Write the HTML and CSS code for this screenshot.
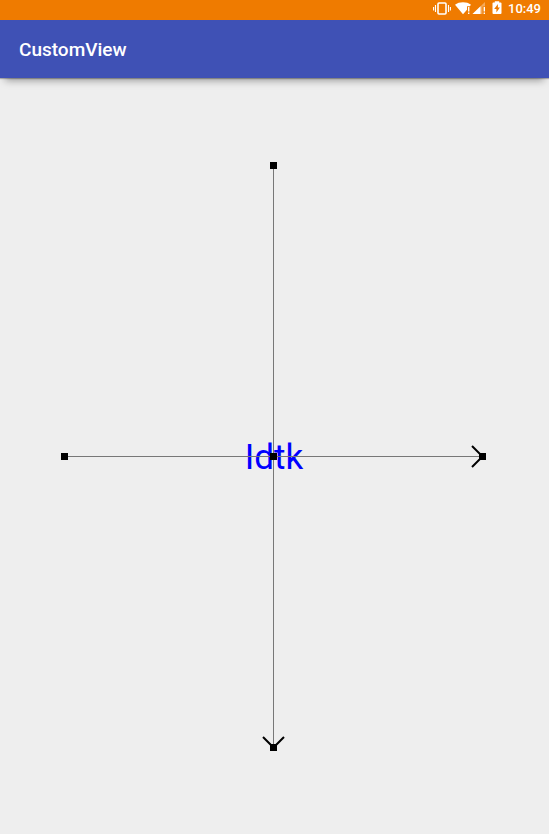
FILE: index.html
```html
<!DOCTYPE html>
<html lang="en">
<head>
<meta charset="utf-8">
<meta name="viewport" content="width=device-width, initial-scale=1">
<title>CustomView</title>
<link rel="stylesheet" href="styles.css">
</head>
<body>
<div class="status-bar">
  <svg class="status-icons" width="73" height="20" viewBox="0 0 73 20" aria-hidden="true">
    <!-- vibrate -->
    <rect x="5" y="3" width="8" height="11" rx="1" fill="none" stroke="#fff" stroke-width="1.6"/>
    <path d="M2.5 5v7M.6 7v3.5M15.5 5v7M17.4 7v3.5" stroke="#fff" stroke-width="1.1"/>
    <!-- wifi -->
    <path d="M22 4.7C26 1.4 34 1.4 38 4.7L36.8 6.2H34V9.7L30 14.2Z" fill="#fff"/>
    <path d="M35.7 7v4.5M35.7 12.4v1.7" stroke="#fff" stroke-width="1.4"/>
    <!-- mobile signal -->
    <path d="M52 2V6.4H49.5V14H39.5Z" fill="#fff" opacity=".35"/>
    <path d="M47.5 6.2V14H39.5Z" fill="#fff"/>
    <path d="M51.3 7v4.5M51.3 12.4v1.7" stroke="#fff" stroke-width="1.4"/>
    <!-- battery -->
    <path d="M61.8 2.4V1.2h4.4v1.2h1.4q.9 0 .9.9v9.8q0 .9-.9.9h-7.2q-.9 0-.9-.9V3.3q0-.9.9-.9Z" fill="#fff"/>
    <path d="M64.9 4 61.2 8.9h2.2v3.6L66.9 7.5h-2Z" fill="#ef7b00"/>
  </svg>
  <time class="clock">10:49</time>
</div>
<header class="app-bar">
  <h1 class="title">CustomView</h1>
</header>
<main class="content">
  <svg class="axes" viewBox="0 0 549 756">
    <text class="label" x="274" y="391" text-anchor="middle">Idtk</text>
    <path class="axis" d="M64.5 378.5H482.5M273.5 87.5V669.5"/>
    <path class="arrow" d="M472 368 482.5 378.5 472 389M263 659 273.5 669.5 284 659"/>
    <path class="point" d="M61 375h7v7h-7ZM479 375h7v7h-7ZM270 375h7v7h-7ZM270 84h7v7h-7ZM270 666h7v7h-7Z"/>
  </svg>
</main>
</body>
</html>
```
FILE: styles.css
```css
* {
  box-sizing: border-box;
}

body {
  margin: 0;
  min-height: 100vh;
  display: flex;
  flex-direction: column;
  background: #eee;
  font-family: Roboto, sans-serif;
}

.status-bar {
  height: 20px;
  padding-right: 8px;
  display: flex;
  justify-content: flex-end;
  gap: 2px;
  background: #ef7b00;
  color: #fff;
}

.status-icons {
  display: block;
}

.clock {
  font-size: 13px;
  font-weight: 500;
  line-height: 18px;
}

.app-bar {
  height: 58px;
  padding: 2px 19px 0;
  display: flex;
  align-items: center;
  background: #3f51b5;
  color: #fff;
  box-shadow: 0 1px 1px rgba(0, 0, 0, 0.25), 0 7px 8px -5px rgba(0, 0, 0, 0.4);
}

.title {
  margin: 0;
  font-size: 19px;
  font-weight: 500;
  line-height: 24px;
}

.content {
  flex: 1;
  display: flex;
}

.axes {
  display: block;
  width: 100%;
}

.label {
  fill: #00f;
  font-size: 35px;
}

.axis {
  fill: none;
  stroke: #777;
  stroke-width: 1;
}

.arrow {
  fill: none;
  stroke: #000;
  stroke-width: 2;
}

.point {
  fill: #000;
}
```
